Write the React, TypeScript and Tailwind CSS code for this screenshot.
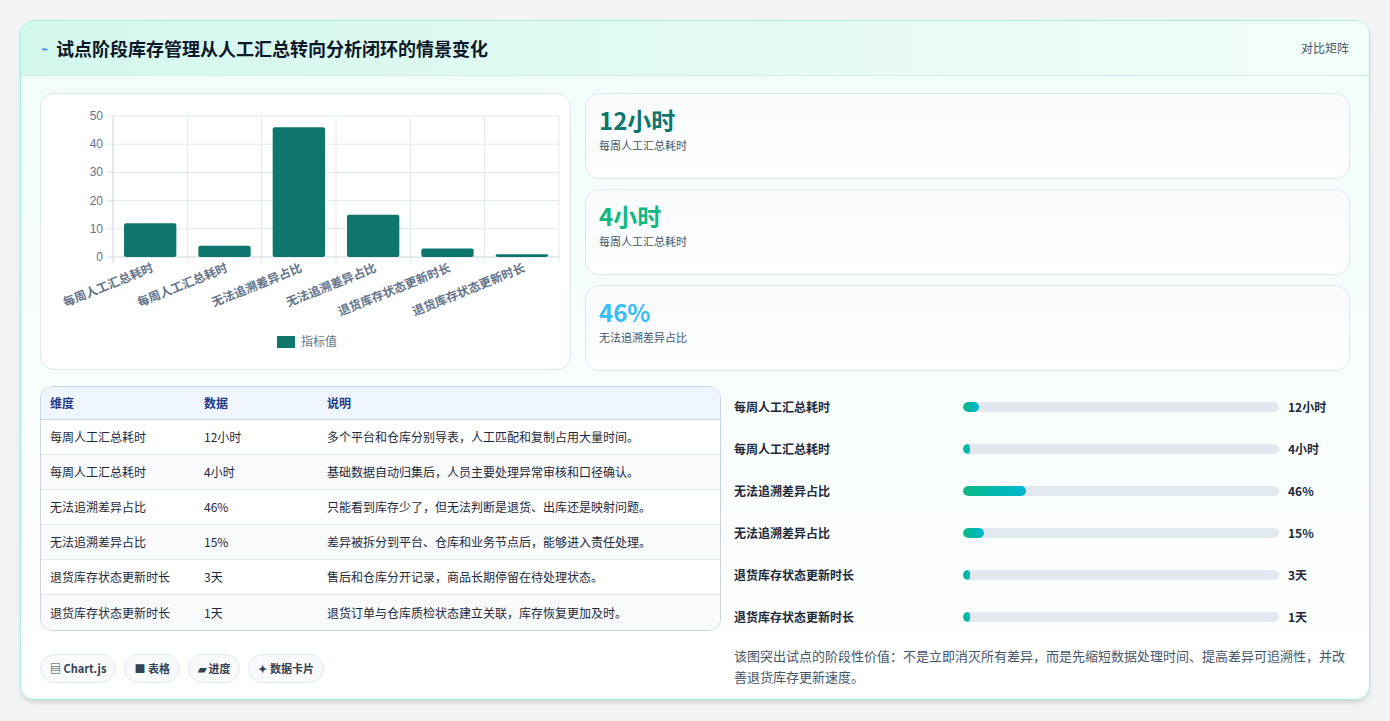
import React from "react";

const labels = ["每周人工汇总耗时","每周人工汇总耗时","无法追溯差异占比","无法追溯差异占比","退货库存状态更新时长","退货库存状态更新时长"];
const vals = [12,4,46,15,3,1];
const disp = ["12小时","4小时","46%","15%","3天","1天"];
const notes = ["多个平台和仓库分别导表，人工匹配和复制占用大量时间。","基础数据自动归集后，人员主要处理异常审核和口径确认。","只能看到库存少了，但无法判断是退货、出库还是映射问题。","差异被拆分到平台、仓库和业务节点后，能够进入责任处理。","售后和仓库分开记录，商品长期停留在待处理状态。","退货订单与仓库质检状态建立关联，库存恢复更加及时。"];

function Chart() {
  const x0 = 72, x1 = 518, yT = 22, y0 = 163;
  const cw = (x1 - x0) / 6;
  const sy = (v: number) => y0 - (v / 50) * (y0 - yT);
  return (
    <svg width="531" height="277" className="block">
      {[0,10,20,30,40,50].map(v => (
        <g key={v}>
          <line x1={x0 - 6} x2={x1} y1={sy(v)} y2={sy(v)} stroke={v===0?"#cbd5e1":"#e2e8f0"} />
          <text x={x0 - 10} y={sy(v) + 4} textAnchor="end" fontSize="12" fill="#64748b" fontFamily="Liberation Sans, sans-serif">{v}</text>
        </g>
      ))}
      {Array.from({length:7}).map((_,i)=>(
        <line key={i} x1={x0+i*cw} x2={x0+i*cw} y1={yT} y2={y0+6} stroke={i===0?"#cbd5e1":"#e2e8f0"} />
      ))}
      {vals.map((v,i)=>(
        <rect key={i} x={x0+i*cw+11} y={sy(v)} width={cw-22} height={y0-sy(v)} rx="2" fill="#0f766e" />
      ))}
      {labels.map((l,i)=>(
        <text key={i} transform={`translate(${x0+i*cw+cw/2+4},${y0+14}) rotate(-22)`} textAnchor="end" fontSize="12" fontWeight="600" fill="#64748b" fontFamily="Noto Sans CJK SC, sans-serif">{l}</text>
      ))}
      <rect x="236" y="242" width="18" height="12" fill="#0f766e" />
      <text x="260" y="252" fontSize="12" fill="#64748b" fontFamily="Noto Sans CJK SC, sans-serif">指标值</text>
    </svg>
  );
}

export default function App() {
  return (
    <div className="w-[1390px] h-[721px] bg-[#f3f4f6] pt-[20px] pl-[20px]" style={{fontFamily:'"Noto Sans CJK SC", "Noto Sans", sans-serif'}}>
      <div className="w-[1350px] h-[680px] rounded-[14px] border border-[#a7efdc] bg-gradient-to-b from-[#f0fdf8] to-[#ffffff] overflow-hidden shadow-md">
        <div className="h-[55px] flex items-center justify-between px-[20px] bg-gradient-to-r from-[#d3f8ec] to-[#f2fdf9] border-b border-[#d6ecef]">
          <div className="flex items-center gap-[8px]">
            <span className="text-[#3b82f6] text-[12px]">⌁</span>
            <span className="text-[18px] font-bold text-[#0f172a]">试点阶段库存管理从人工汇总转向分析闭环的情景变化</span>
          </div>
          <span className="text-[12px] text-[#475569]">对比矩阵</span>
        </div>
        <div className="px-[19px] pt-[17px]">
          <div className="flex gap-[14px]">
            <div className="w-[531px] h-[277px] rounded-[14px] border border-[#dde7f0] bg-white"><Chart /></div>
            <div className="flex-1 flex flex-col gap-[10px]">
              {[["12小时","每周人工汇总耗时","text-[#0f766e]"],["4小时","每周人工汇总耗时","text-[#10b981]"],["46%","无法追溯差异占比","text-[#38bdf8]"]].map(([a,b,c],i)=>(
                <div key={i} className="h-[86px] rounded-[14px] border border-[#dbe7f3] bg-gradient-to-b from-[#f8fafc] to-white px-[13px] pt-[10px]">
                  <div className={`text-[24px] font-bold leading-[32px] ${c}`}>{a}</div>
                  <div className="text-[11px] text-[#475569] mt-[1px]">{b}</div>
                </div>
              ))}
            </div>
          </div>
          <div className="flex gap-[13px] mt-[15px]">
            <div className="w-[681px]">
              <div className="rounded-[12px] border border-[#cbd5e1] overflow-hidden bg-white">
                <div className="flex h-[33px] items-center bg-[#eff6ff] border-b border-[#cbd5e1] text-[12px] font-bold text-[#1e3a8a]">
                  <div className="w-[163px] pl-[9px]">维度</div><div className="w-[123px]">数据</div><div>说明</div>
                </div>
                {labels.map((l,i)=>(
                  <div key={i} className={`flex h-[35px] items-center text-[12px] text-[#1e293b] ${i<5?"border-b border-[#e2e8f0]":""} ${i%2===1?"bg-[#f8fafc]":"bg-white"}`}>
                    <div className="w-[163px] pl-[9px]">{l}</div><div className="w-[123px]">{disp[i]}</div><div>{notes[i]}</div>
                  </div>
                ))}
              </div>
              <div className="flex gap-[8px] mt-[23px]">
                {["▤ Chart.js","■ 表格","▰ 进度","✦ 数据卡片"].map(t=>(
                  <span key={t} className="h-[29px] px-[9px] flex items-center rounded-full border border-[#e2e8f0] bg-[#f8fafc] text-[11px] font-bold text-[#334155]">{t}</span>
                ))}
              </div>
            </div>
            <div className="flex-1">
              {labels.map((l,i)=>{
                const w = Math.max(2.2, (vals[i]/230)*100);
                return (
                  <div key={i} className="flex items-center h-[42px] text-[12px] font-bold text-[#1e293b]">
                    <div className="w-[229px]">{l}</div>
                    <div className="w-[316px] h-[10px] rounded-full bg-[#e2e8f0] overflow-hidden">
                      <div className="h-full rounded-full bg-gradient-to-r from-[#10b981] to-[#06b6d4]" style={{width:`${w}%`}} />
                    </div>
                    <div className="ml-[9px]">{disp[i]}</div>
                  </div>
                );
              })}
              <p className="mt-[7px] text-[13px] leading-[21px] text-[#475569] pr-[4px]">该图突出试点的阶段性价值：不是立即消灭所有差异，而是先缩短数据处理时间、提高差异可追溯性，并改善退货库存更新速度。</p>
            </div>
          </div>
        </div>
      </div>
    </div>
  );
}
